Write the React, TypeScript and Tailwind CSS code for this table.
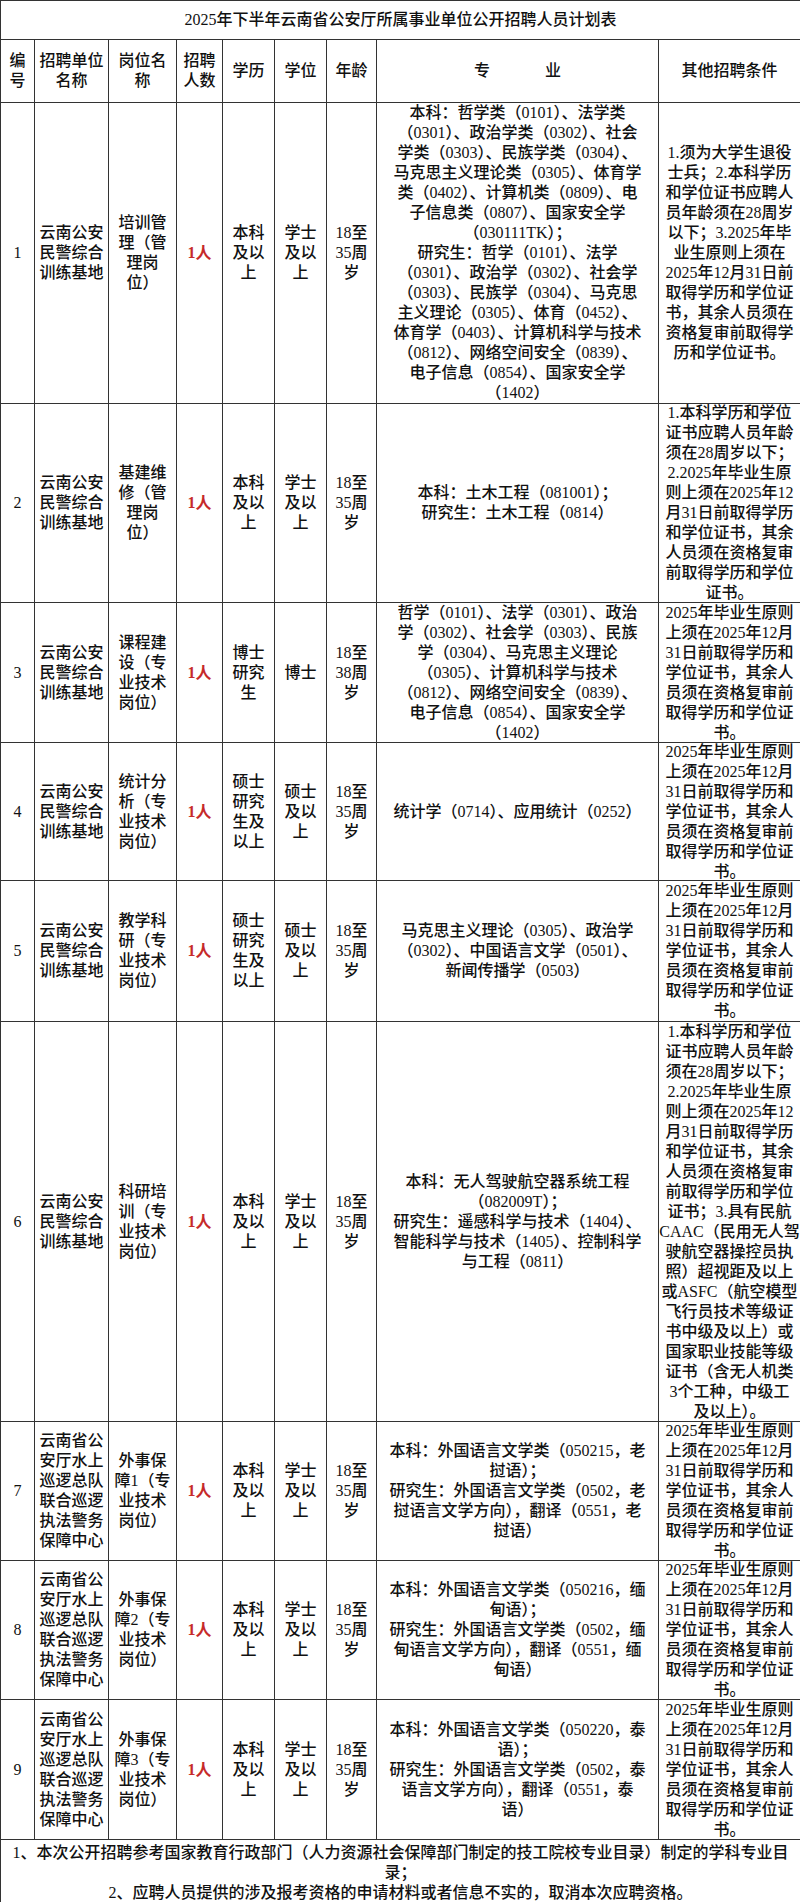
const unitA = ['云南公安', '民警综合', '训练基地'];
const unitB = ['云南省公', '安厅水上', '巡逻总队', '联合巡逻', '执法警务', '保障中心'];
const bachelorUp = ['本科', '及以', '上'];
const xueshiUp = ['学士', '及以', '上'];
const masterEdu = ['硕士', '研究', '生及', '以上'];
const masterDeg = ['硕士', '及以', '上'];
const age35 = ['18至', '35周', '岁'];

const condGrad = [
  '2025年毕业生原则',
  '上须在2025年12月',
  '31日前取得学历和',
  '学位证书，其余人',
  '员须在资格复审前',
  '取得学历和学位证',
  '书。',
];

const condAge = [
  '1.本科学历和学位',
  '证书应聘人员年龄',
  '须在28周岁以下；',
  '2.2025年毕业生原',
  '则上须在2025年12',
  '月31日前取得学历',
  '和学位证书，其余',
  '人员须在资格复审',
  '前取得学历和学位',
];

type Row = {
  no: string;
  unit: string[];
  post: string[];
  edu: string[];
  degree: string[];
  age: string[];
  major: string[];
  cond: string[];
  h: string;
};

const rows: Row[] = [
  {
    no: '1',
    unit: unitA,
    post: ['培训管', '理（管', '理岗', '位）'],
    edu: bachelorUp,
    degree: xueshiUp,
    age: age35,
    major: [
      '本科：哲学类（0101）、法学类',
      '（0301）、政治学类（0302）、社会',
      '学类（0303）、民族学类（0304）、',
      '马克思主义理论类（0305）、体育学',
      '类（0402）、计算机类（0809）、电',
      '子信息类（0807）、国家安全学',
      '（030111TK）；',
      '研究生：哲学（0101）、法学',
      '（0301）、政治学（0302）、社会学',
      '（0303）、民族学（0304）、马克思',
      '主义理论（0305）、体育（0452）、',
      '体育学（0403）、计算机科学与技术',
      '（0812）、网络空间安全（0839）、',
      '电子信息（0854）、国家安全学',
      '（1402）',
    ],
    cond: [
      '1.须为大学生退役',
      '士兵；2.本科学历',
      '和学位证书应聘人',
      '员年龄须在28周岁',
      '以下；3.2025年毕',
      '业生原则上须在',
      '2025年12月31日前',
      '取得学历和学位证',
      '书，其余人员须在',
      '资格复审前取得学',
      '历和学位证书。',
    ],
    h: 'h-[300px]',
  },
  {
    no: '2',
    unit: unitA,
    post: ['基建维', '修（管', '理岗', '位）'],
    edu: bachelorUp,
    degree: xueshiUp,
    age: age35,
    major: ['本科：土木工程（081001）；', '研究生：土木工程（0814）'],
    cond: [...condAge, '证书。'],
    h: 'h-[198px]',
  },
  {
    no: '3',
    unit: unitA,
    post: ['课程建', '设（专', '业技术', '岗位）'],
    edu: ['博士', '研究', '生'],
    degree: ['博士'],
    age: ['18至', '38周', '岁'],
    major: [
      '哲学（0101）、法学（0301）、政治',
      '学（0302）、社会学（0303）、民族',
      '学（0304）、马克思主义理论',
      '（0305）、计算机科学与技术',
      '（0812）、网络空间安全（0839）、',
      '电子信息（0854）、国家安全学',
      '（1402）',
    ],
    cond: condGrad,
    h: 'h-[139px]',
  },
  {
    no: '4',
    unit: unitA,
    post: ['统计分', '析（专', '业技术', '岗位）'],
    edu: masterEdu,
    degree: masterDeg,
    age: age35,
    major: ['统计学（0714）、应用统计（0252）'],
    cond: condGrad,
    h: 'h-[137px]',
  },
  {
    no: '5',
    unit: unitA,
    post: ['教学科', '研（专', '业技术', '岗位）'],
    edu: masterEdu,
    degree: masterDeg,
    age: age35,
    major: ['马克思主义理论（0305）、政治学', '（0302）、中国语言文学（0501）、', '新闻传播学（0503）'],
    cond: condGrad,
    h: 'h-[140px]',
  },
  {
    no: '6',
    unit: unitA,
    post: ['科研培', '训（专', '业技术', '岗位）'],
    edu: bachelorUp,
    degree: xueshiUp,
    age: age35,
    major: [
      '本科：无人驾驶航空器系统工程',
      '（082009T）；',
      '研究生：遥感科学与技术（1404）、',
      '智能科学与技术（1405）、控制科学',
      '与工程（0811）',
    ],
    cond: [
      ...condAge,
      '证书；3.具有民航',
      'CAAC（民用无人驾',
      '驶航空器操控员执',
      '照）超视距及以上',
      '或ASFC（航空模型',
      '飞行员技术等级证',
      '书中级及以上）或',
      '国家职业技能等级',
      '证书（含无人机类',
      '3个工种，中级工',
      '及以上）。',
    ],
    h: 'h-[399px]',
  },
  {
    no: '7',
    unit: unitB,
    post: ['外事保', '障1（专', '业技术', '岗位）'],
    edu: bachelorUp,
    degree: xueshiUp,
    age: age35,
    major: [
      '本科：外国语言文学类（050215，老',
      '挝语）；',
      '研究生：外国语言文学类（0502，老',
      '挝语言文学方向），翻译（0551，老',
      '挝语）',
    ],
    cond: condGrad,
    h: 'h-[138px]',
  },
  {
    no: '8',
    unit: unitB,
    post: ['外事保', '障2（专', '业技术', '岗位）'],
    edu: bachelorUp,
    degree: xueshiUp,
    age: age35,
    major: [
      '本科：外国语言文学类（050216，缅',
      '甸语）；',
      '研究生：外国语言文学类（0502，缅',
      '甸语言文学方向），翻译（0551，缅',
      '甸语）',
    ],
    cond: condGrad,
    h: 'h-[138px]',
  },
  {
    no: '9',
    unit: unitB,
    post: ['外事保', '障3（专', '业技术', '岗位）'],
    edu: bachelorUp,
    degree: xueshiUp,
    age: age35,
    major: [
      '本科：外国语言文学类（050220，泰',
      '语）；',
      '研究生：外国语言文学类（0502，泰',
      '语言文学方向），翻译（0551，泰',
      '语）',
    ],
    cond: condGrad,
    h: 'h-[139px]',
  },
];

// 固定高度，多出的行在上下两端被裁掉（和原表一样）
function Lines({ lines, h }: { lines: string[]; h: string }) {
  return (
    <div className={`${h} flex flex-col items-center justify-center overflow-hidden`}>
      {lines.map((l, i) => (
        <div key={i} className="whitespace-nowrap">
          {l}
        </div>
      ))}
    </div>
  );
}

const cell = 'border border-[#333] p-0 text-center align-middle overflow-hidden';

export default function App() {
  return (
    <div className="w-[800px] h-[1902px] overflow-hidden bg-white font-['Liberation_Serif','Noto_Sans_CJK_SC',serif] text-[16px] leading-[20px] font-medium text-[#111]">
      <table className="w-[800px] table-fixed border-collapse">
        <colgroup>
          <col className="w-[34px]" />
          <col className="w-[74px]" />
          <col className="w-[68px]" />
          <col className="w-[46px]" />
          <col className="w-[52px]" />
          <col className="w-[52px]" />
          <col className="w-[50px]" />
          <col className="w-[282px]" />
          <col className="w-[142px]" />
        </colgroup>
        <tbody>
          {/* 标题 */}
          <tr>
            <td colSpan={9} className={cell}>
              <Lines h="h-[38px]" lines={['2025年下半年云南省公安厅所属事业单位公开招聘人员计划表']} />
            </td>
          </tr>

          {/* 表头 */}
          <tr>
            <td className={cell}>
              <Lines h="h-[62px]" lines={['编', '号']} />
            </td>
            <td className={cell}>
              <Lines h="h-[62px]" lines={['招聘单位', '名称']} />
            </td>
            <td className={cell}>
              <Lines h="h-[62px]" lines={['岗位名', '称']} />
            </td>
            <td className={cell}>
              <Lines h="h-[62px]" lines={['招聘', '人数']} />
            </td>
            <td className={cell}>
              <Lines h="h-[62px]" lines={['学历']} />
            </td>
            <td className={cell}>
              <Lines h="h-[62px]" lines={['学位']} />
            </td>
            <td className={cell}>
              <Lines h="h-[62px]" lines={['年龄']} />
            </td>
            <td className={cell}>
              <div className="flex h-[62px] items-center justify-center gap-[55px]">
                <span>专</span>
                <span>业</span>
              </div>
            </td>
            <td className={cell}>
              <Lines h="h-[62px]" lines={['其他招聘条件']} />
            </td>
          </tr>

          {rows.map((r) => (
            <tr key={r.no}>
              <td className={cell}>
                <Lines h={r.h} lines={[r.no]} />
              </td>
              <td className={cell}>
                <Lines h={r.h} lines={r.unit} />
              </td>
              <td className={cell}>
                <Lines h={r.h} lines={r.post} />
              </td>
              <td className={cell}>
                <div className={`${r.h} flex items-center justify-center font-bold text-[#c62a2a]`}>1人</div>
              </td>
              <td className={cell}>
                <Lines h={r.h} lines={r.edu} />
              </td>
              <td className={cell}>
                <Lines h={r.h} lines={r.degree} />
              </td>
              <td className={cell}>
                <Lines h={r.h} lines={r.age} />
              </td>
              <td className={cell}>
                <Lines h={r.h} lines={r.major} />
              </td>
              <td className={cell}>
                <Lines h={r.h} lines={r.cond} />
              </td>
            </tr>
          ))}

          {/* 说明 */}
          <tr>
            <td colSpan={9} className={cell + ' align-top'}>
              <div className="flex h-[62px] flex-col items-center pt-[3px]">
                <div className="whitespace-nowrap">
                  1、本次公开招聘参考国家教育行政部门（人力资源社会保障部门制定的技工院校专业目录）制定的学科专业目
                </div>
                <div>录；</div>
                <div className="whitespace-nowrap">
                  2、应聘人员提供的涉及报考资格的申请材料或者信息不实的，取消本次应聘资格。
                </div>
              </div>
            </td>
          </tr>
        </tbody>
      </table>
    </div>
  );
}
